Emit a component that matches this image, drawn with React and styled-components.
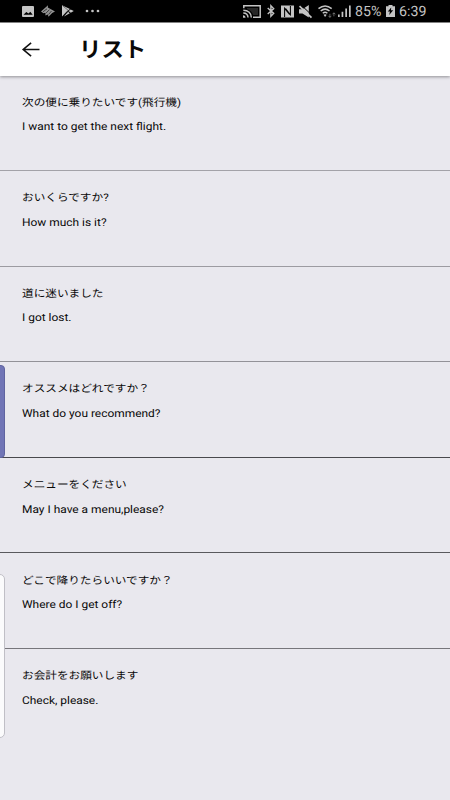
import React from 'react';
import styled, { createGlobalStyle } from 'styled-components';

const Global = createGlobalStyle`
  * { box-sizing: border-box; }
  html, body { margin: 0; padding: 0; background: #e9e8ee; }
`;
const Screen = styled.div`
  position: relative;
  width: 450px;
  height: 800px;
  overflow: hidden;
  display: flex;
  flex-direction: column;
  background: #e9e8ee;
  color: #090909;
  font-family: Roboto, "Noto Sans CJK JP", sans-serif;
  text-rendering: geometricPrecision;
`;
const StatusBar = styled.header`
  flex: none;
  height: 23px;
  padding: 0 23px 0 22px;
  display: flex;
  justify-content: space-between;
  align-items: center;
  background: #000;
  border-bottom: 1px solid #8b8b8b;
  color: #c4c4c4;
`;
const IconGroup = styled.div`
  display: flex;
  align-items: center;
  height: 22px;
`;
const Glyph = styled.svg`
  display: block;
  flex: none;
  width: ${p => p.$w}px;
  height: ${p => p.$h}px;
  margin-left: ${p => p.$gap || 0}px;
  fill: currentColor;
  overflow: visible;
`;
const StatusText = styled.span`
  display: block;
  width: ${p => p.$w}px;
  margin-left: ${p => p.$gap}px;
  font-size: 14.2px;
  line-height: 22px;
  white-space: nowrap;
  transform: translateY(1px);
`;
const AppBar = styled.div`
  flex: none;
  z-index: 1;
  height: 52.5px;
  padding-left: 22px;
  display: flex;
  align-items: center;
  background: #fff;
  box-shadow: 0 1px 3px rgba(0, 0, 0, 0.38);
`;
const Title = styled.h1`
  margin: 0 0 0 39px;
  font-size: 22.4px;
  line-height: 32px;
  font-weight: 700;
  transform: translateY(1px) scaleY(0.95);
`;
const List = styled.main`
  display: flex;
  flex-direction: column;
`;
const Row = styled.article`
  height: 95.6px;
  padding: 14.2px 22px 0;
  border-bottom: 1px solid ${p => p.$line};
`;
const Phrase = styled.p`
  margin: 0;
  height: 24.5px;
  font-size: ${p => p.$size}px;
  line-height: 24.5px;
  white-space: nowrap;
  transform: scaleY(0.9);
`;
const EdgeHandle = styled.div`
  position: absolute;
  left: -5px;
  top: 365px;
  width: 10px;
  height: 93px;
  border-radius: 4px;
  background: #7175b6;
  border: 1px solid #6064a0;
`;
const EdgePanel = styled.div`
  position: absolute;
  left: -6px;
  top: 574px;
  width: 11px;
  height: 164px;
  border-radius: 5px;
  background: #fbfbfc;
  border: 1px solid #c0bfc6;
`;

const PictureIcon = () => (
  <Glyph $w={12} $h={11} viewBox="0 0 12 11">
    <path fillRule="evenodd" d="M1 0h10q1 0 1 1v9q0 1-1 1H1q-1 0-1-1V1q0-1 1-1zM1.5 8.7h9.2L8.3 5.8 6.5 7.6 4.3 6.1z" />
  </Glyph>
);
const BirdIcon = () => (
  <Glyph $w={14} $h={12} $gap={7} viewBox="0 0 14 12">
    <path d="M0 6.5 7 .3 6.8 2.5 14 6.5 11.2 8 7.5 11.8 6.8 9.5 4.5 10.5 4.2 7.8 2.5 8.2z" opacity=".75" />
    <path d="m2 6.8 4-3M4.5 8.6l4-4M7.5 9.5l3-3.5" stroke="#000" strokeWidth=".6" />
  </Glyph>
);
const PlayIcon = () => (
  <Glyph $w={12} $h={12} $gap={7} viewBox="0 0 12 12">
    <path d="M0 .2 8 4.1 5.2 6 0 11.5z" />
    <path d="m8.7 4.4 3.1 1.7-3 1.7L6.6 6zM5.9 6.6l1.9 1.7L2 11.4z" />
    <path d="m1 1 6 5-5 5" fill="none" stroke="#222" strokeWidth=".55" />
  </Glyph>
);
const MoreIcon = () => (
  <Glyph $w={15} $h={4} $gap={10.5} viewBox="0 0 15 4">
    <circle cx="2" cy="2" r="1.35" /><circle cx="7.5" cy="2" r="1.35" /><circle cx="13" cy="2" r="1.35" />
  </Glyph>
);
const CastIcon = () => (
  <Glyph $w={18} $h={13} viewBox="0 0 18 13">
    <path d="M.8 3.3V.8h16.4v11.4H10M.3 5.2c5 0 8 3.1 8 7.3M.3 8c3 0 4.7 1.9 4.7 4.5" fill="none" stroke="currentColor" strokeWidth="1.5" />
    <path d="M0 10.2q2.5 0 2.5 2.6H0z" />
    <path d="M4 3h11v7h-4.8Q8.7 5.5 4 4.2z" opacity=".2" />
  </Glyph>
);
const BluetoothIcon = () => (
  <Glyph $w={8} $h={12} $gap={6} viewBox="0 0 8 12">
    <path d="m.7 3.1 6 5.3-2.8 2.9V.7l2.8 2.9-6 5.3" fill="none" stroke="currentColor" strokeWidth="1.4" />
  </Glyph>
);
const NfcIcon = () => (
  <Glyph $w={13} $h={13} $gap={6} viewBox="0 0 13 13">
    <path d="M0 .5h13v12H0z" />
    <path d="M3.6 12V3.3l5 6.2M9.4 1v8.7L4.6 3.5" fill="none" stroke="#000" strokeWidth="1.05" />
  </Glyph>
);
const MuteIcon = () => (
  <Glyph $w={13} $h={13} $gap={5} viewBox="0 0 13 13">
    <path d="M0 4.2h3.5L9.8 0v12.5L3.5 8.6H0z" />
    <path d="m3 .8 10 9.5" stroke="#000" strokeWidth="1" />
    <path d="m.5 1.1 12 11.5" stroke="currentColor" strokeWidth="1.7" />
  </Glyph>
);
const WifiIcon = () => (
  <Glyph $w={18} $h={13} $gap={6} viewBox="0 0 18 13">
    <path d="M.5 3.7q6.6-5.5 13.2 0M2.7 6q4.4-3.7 8.8 0M4.8 8.2q2.3-2 4.6 0" fill="none" stroke="currentColor" strokeWidth="1.5" />
    <path d="m5.5 9.8 1.6 2.3 1.6-2.3q-1.6-1.2-3.2 0z" />
    <path d="M11.9 8.8v3.5M10.4 10.8l1.5 1.6 1.5-1.6M15.9 7.8v3.5M14.4 9.3l1.5-1.5 1.5 1.5" fill="none" stroke="currentColor" strokeWidth=".8" opacity=".6" />
  </Glyph>
);
const SignalIcon = () => (
  <Glyph $w={13} $h={12} $gap={2} viewBox="0 0 13 12">
    <path d="M0 9.5h1.7V12H0zM3.6 6.8h1.7V12H3.6zM7.3 3.5H9V12H7.3zM11 .5h1.7V12H11z" />
  </Glyph>
);
const BatteryIcon = () => (
  <Glyph $w={9} $h={12} $gap={3.5} viewBox="0 0 9 12">
    <path d="M0 1.3h2.5V0h4v1.3H9V12H0z" />
    <path d="m5.2 2.4-3.4 4h2.1L3.2 10l4-4.7H5z" fill="#000" />
  </Glyph>
);
const BackIcon = () => (
  <Glyph $w={18} $h={15} viewBox="0 0 18 15">
    <path d="M17.5 7.5H1.5M9.1.8 1.2 7.5l7.9 6.7" fill="none" stroke="#111" strokeWidth="1.6" />
  </Glyph>
);

const phrases = [
  { ja: '次の便に乗りたいです(飛行機)', en: 'I want to get the next flight.', line: '#a3a2a8' },
  { ja: 'おいくらですか?', en: 'How much is it?', line: '#9c9ba1' },
  { ja: '道に迷いました', en: 'I got lost.', line: '#939298' },
  { ja: 'オススメはどれですか？', en: 'What do you recommend?', line: '#49494d' },
  { ja: 'メニューをください', en: 'May I have a menu,please?', line: '#59595d' },
  { ja: 'どこで降りたらいいですか？', en: 'Where do I get off?', line: '#77767b' },
  { ja: 'お会計をお願いします', en: 'Check, please.', line: 'transparent' },
];

export default function App() {
  return (
    <Screen>
      <Global />
      <StatusBar>
        <IconGroup><PictureIcon /><BirdIcon /><PlayIcon /><MoreIcon /></IconGroup>
        <IconGroup>
          <CastIcon /><BluetoothIcon /><NfcIcon /><MuteIcon /><WifiIcon /><SignalIcon />
          <StatusText $w={27.5} $gap={4.5}>85%</StatusText>
          <BatteryIcon />
          <StatusText $w={28} $gap={4}>6:39</StatusText>
        </IconGroup>
      </StatusBar>
      <AppBar><BackIcon /><Title>リスト</Title></AppBar>
      <List>
        {phrases.map(p => (
          <Row key={p.en} $line={p.line}>
            <Phrase lang="ja" $size={11.65}>{p.ja}</Phrase>
            <Phrase $size={11.95}>{p.en}</Phrase>
          </Row>
        ))}
      </List>
      <EdgeHandle />
      <EdgePanel />
    </Screen>
  );
}
